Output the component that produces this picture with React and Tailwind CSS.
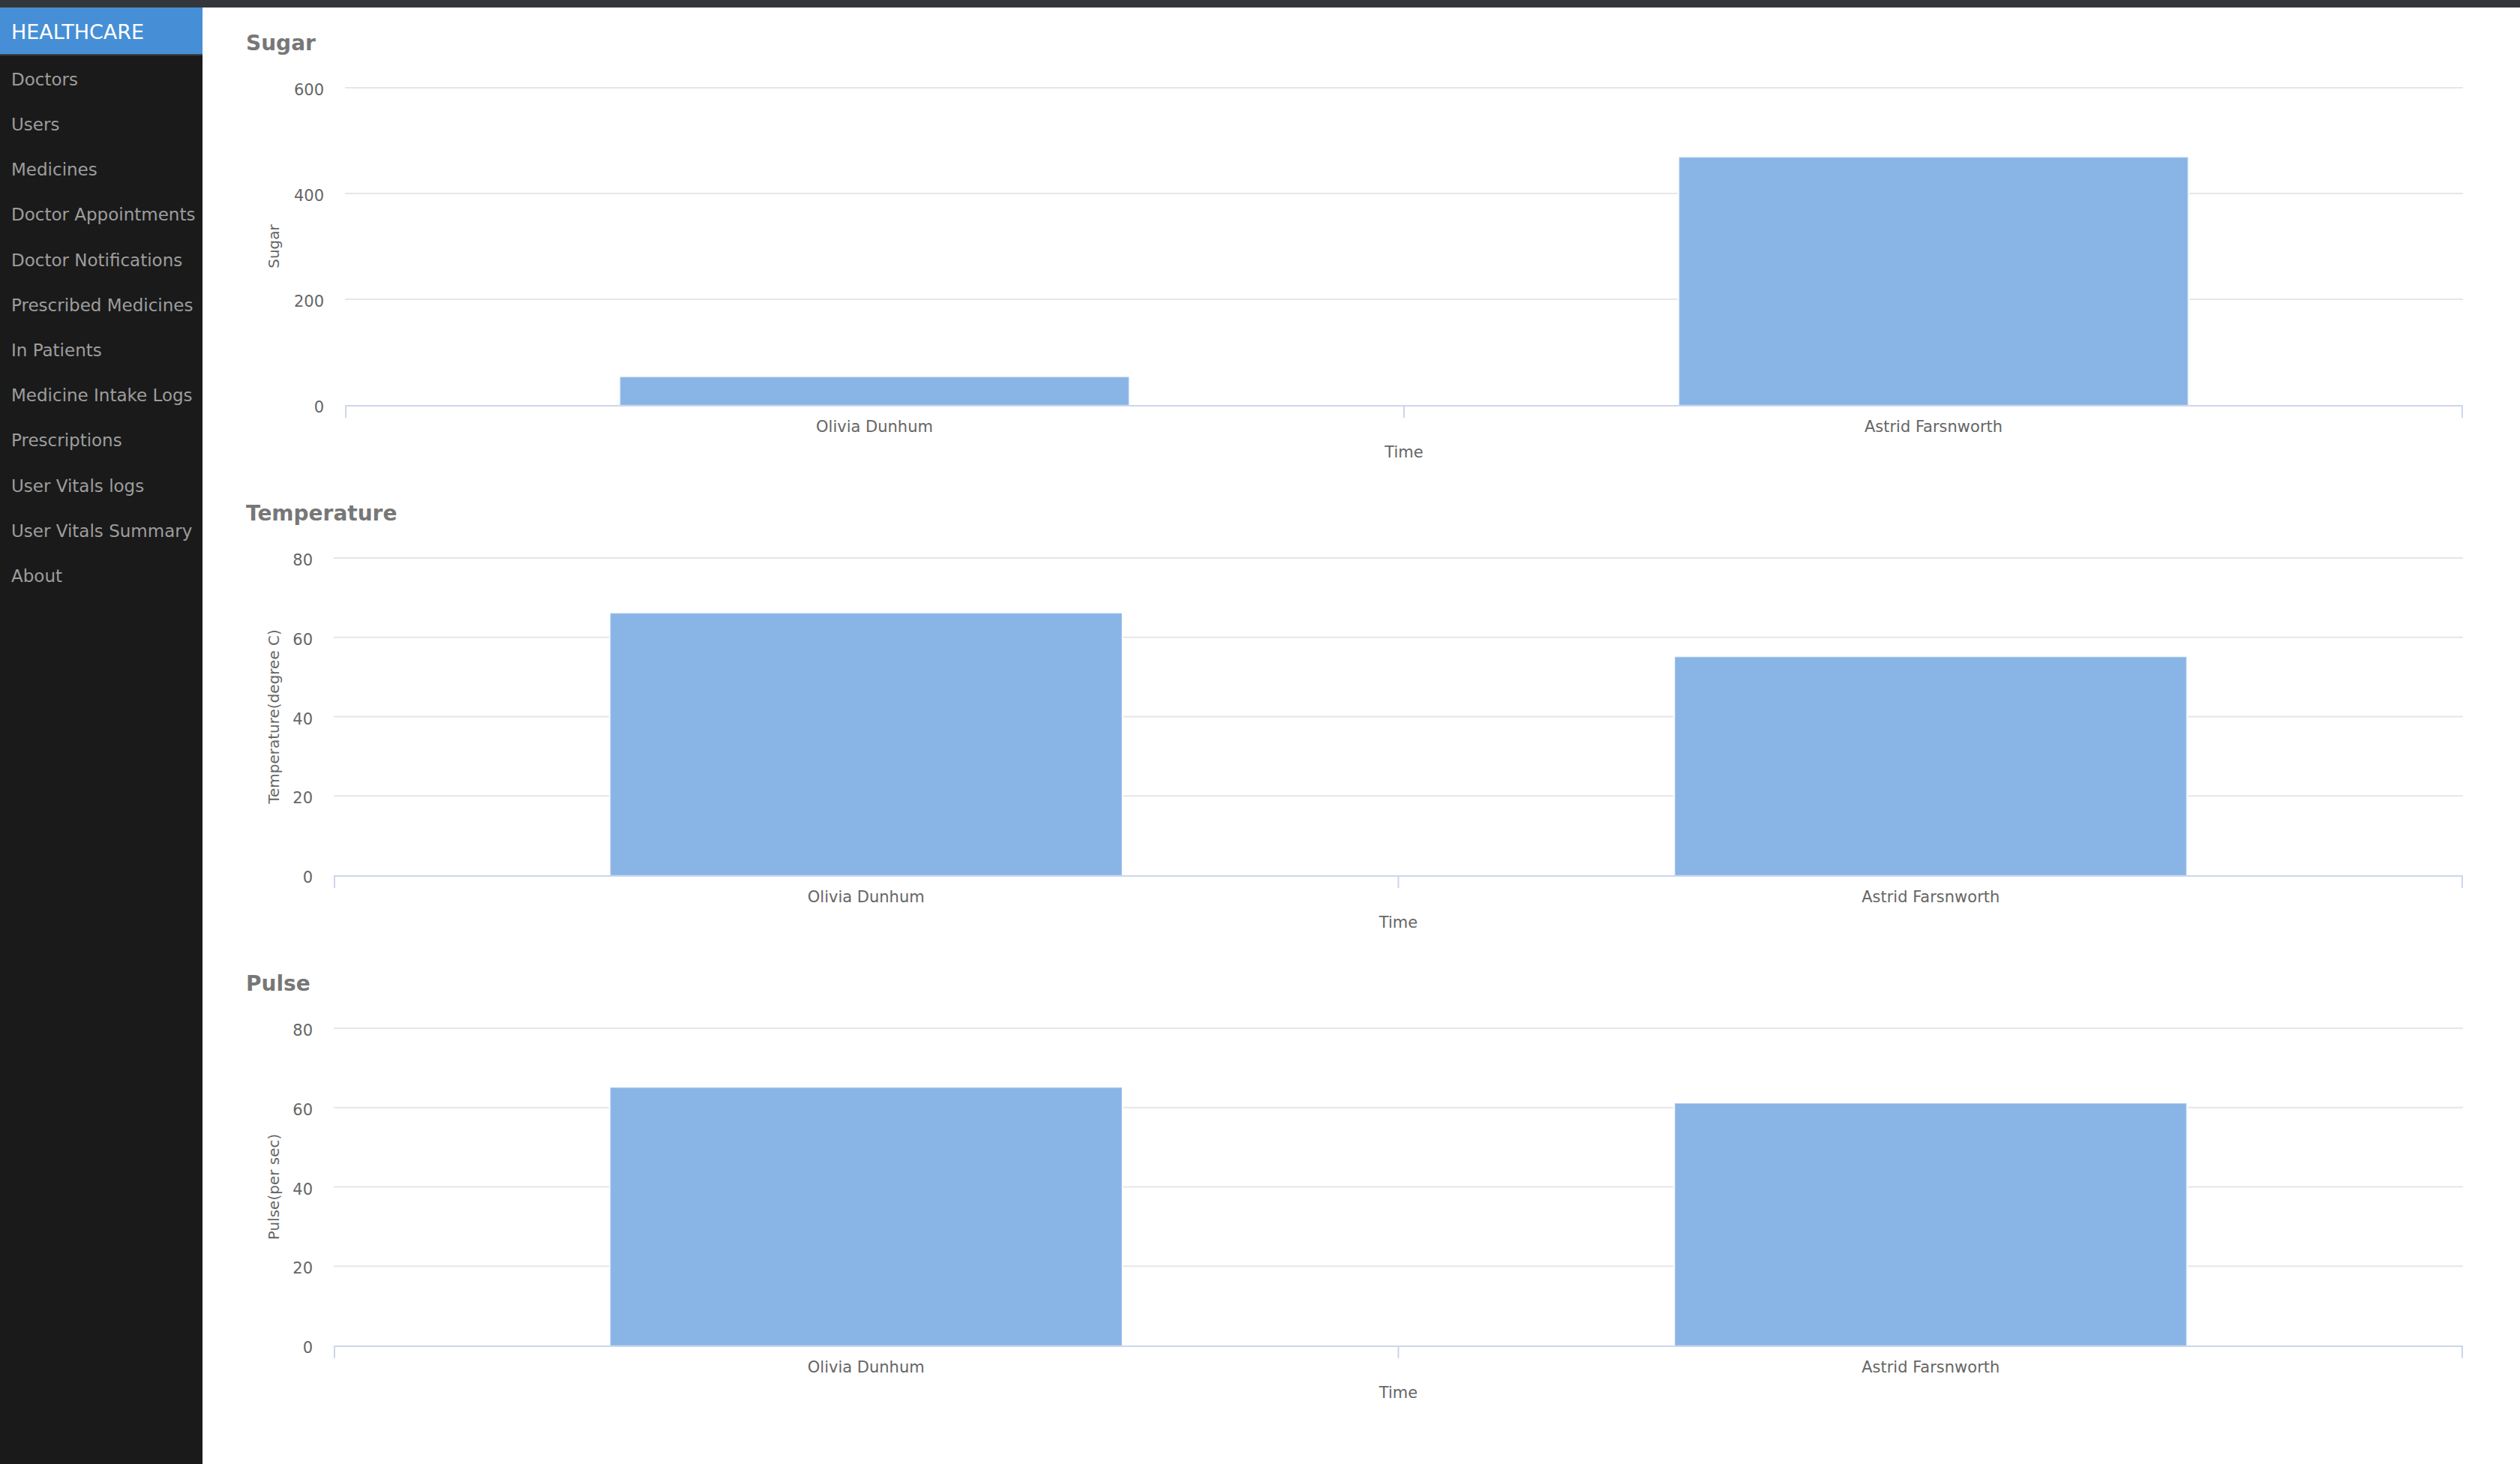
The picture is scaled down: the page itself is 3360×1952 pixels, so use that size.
import React from "react";

const NAV = [
  "Doctors",
  "Users",
  "Medicines",
  "Doctor Appointments",
  "Doctor Notifications",
  "Prescribed Medicines",
  "In Patients",
  "Medicine Intake Logs",
  "Prescriptions",
  "User Vitals logs",
  "User Vitals Summary",
  "About",
];

const CHARTS = [
  {
    title: "Sugar",
    yTitle: "Sugar",
    max: 600,
    ticks: [0, 200, 400, 600],
    plotLeft: 132,
    labelX: 104,
    values: [52.5, 468],
  },
  {
    title: "Temperature",
    yTitle: "Temperature(degree C)",
    max: 80,
    ticks: [0, 20, 40, 60, 80],
    plotLeft: 117,
    labelX: 89,
    values: [66, 55],
  },
  {
    title: "Pulse",
    yTitle: "Pulse(per sec)",
    max: 80,
    ticks: [0, 20, 40, 60, 80],
    plotLeft: 117,
    labelX: 89,
    values: [65, 61],
  },
];

const CATS = ["Olivia Dunhum", "Astrid Farsnworth"];
const W = 2974;
const H = 587;
const PLOT_TOP = 41;
const PLOT_BOTTOM = 464;
const PLOT_RIGHT = 2956;
const FONT = "'DejaVu Sans', Verdana, sans-serif";

function BarChart({ chart }) {
  const { plotLeft, labelX, max, ticks, values, yTitle } = chart;
  const ph = PLOT_BOTTOM - PLOT_TOP;
  const cw = (PLOT_RIGHT - plotLeft) / CATS.length;
  const yOf = (v) => PLOT_BOTTOM - (v / max) * ph;
  const midY = (PLOT_TOP + PLOT_BOTTOM) / 2;
  return (
    <svg width={W} height={H} viewBox={`0 0 ${W} ${H}`} className="block">
      {ticks.map((t) => (
        <g key={t}>
          {t !== 0 && (
            <line
              x1={plotLeft}
              x2={PLOT_RIGHT}
              y1={yOf(t)}
              y2={yOf(t)}
              stroke="#e6e6e6"
              strokeWidth="2"
            />
          )}
          <text
            x={labelX}
            y={yOf(t) + 10}
            textAnchor="end"
            fontFamily={FONT}
            fontSize="21"
            fill="#666666"
          >
            {t}
          </text>
        </g>
      ))}
      {values.map((v, i) => {
        const bx = plotLeft + i * cw + cw * 0.26;
        const bw = cw * 0.48;
        const by = yOf(v);
        return (
          <g key={i}>
            <rect
              x={bx - 2}
              y={by - 2}
              width={bw + 4}
              height={PLOT_BOTTOM - by + 2}
              fill="#ffffff"
            />
            <rect
              x={bx}
              y={by}
              width={bw}
              height={PLOT_BOTTOM - by}
              fill="#88b4e6"
              stroke="#a9c9ee"
              strokeWidth="1"
            />
          </g>
        );
      })}
      <line
        x1={plotLeft}
        x2={PLOT_RIGHT}
        y1={PLOT_BOTTOM + 1}
        y2={PLOT_BOTTOM + 1}
        stroke="#ccd6eb"
        strokeWidth="2"
      />
      {[0, 1, 2].map((k) => {
        const x = plotLeft + k * cw + (k === 0 ? 1 : k === 2 ? -1 : 0);
        return (
          <line
            key={k}
            x1={x}
            x2={x}
            y1={PLOT_BOTTOM}
            y2={PLOT_BOTTOM + 17}
            stroke="#ccd6eb"
            strokeWidth="2"
          />
        );
      })}
      {CATS.map((c, i) => (
        <text
          key={c}
          x={plotLeft + i * cw + cw / 2}
          y={500}
          textAnchor="middle"
          fontFamily={FONT}
          fontSize="21"
          fill="#666666"
        >
          {c}
        </text>
      ))}
      <text
        x={(plotLeft + PLOT_RIGHT) / 2}
        y={534}
        textAnchor="middle"
        fontFamily={FONT}
        fontSize="21"
        fill="#666666"
      >
        Time
      </text>
      <text
        x={44}
        y={midY}
        transform={`rotate(-90 44 ${midY})`}
        textAnchor="middle"
        fontFamily={FONT}
        fontSize="20"
        fill="#666666"
      >
        {yTitle}
      </text>
    </svg>
  );
}

export default function App() {
  return (
    <div className="min-h-screen flex flex-col bg-white font-['DejaVu_Sans',Verdana,sans-serif]">
      <div className="h-[10px] bg-[#33373b] shrink-0" />
      <div className="flex flex-1">
        <aside className="w-[270px] shrink-0 bg-[#1a1a1a]">
          <div className="h-[64px] bg-[#468fd6] border-b-2 border-[#3c3f42] flex items-center px-[15px] pt-[3px]">
            <span className="text-[27px] text-white leading-none">HEALTHCARE</span>
          </div>
          <ul className="pt-[2px]">
            {NAV.map((n) => (
              <li
                key={n}
                className="h-[60.2px] flex items-center px-[15px] text-[23px] text-[#9d9d9d] whitespace-nowrap"
              >
                {n}
              </li>
            ))}
          </ul>
        </aside>
        <main className="flex-1 px-[58px] pt-[26px]">
          {CHARTS.map((c) => (
            <section key={c.title}>
              <h2 className="h-[40px] pt-[3px] leading-[37px] text-[28px] font-bold text-[#777777]">
                {c.title}
              </h2>
              <BarChart chart={c} />
            </section>
          ))}
        </main>
      </div>
    </div>
  );
}
